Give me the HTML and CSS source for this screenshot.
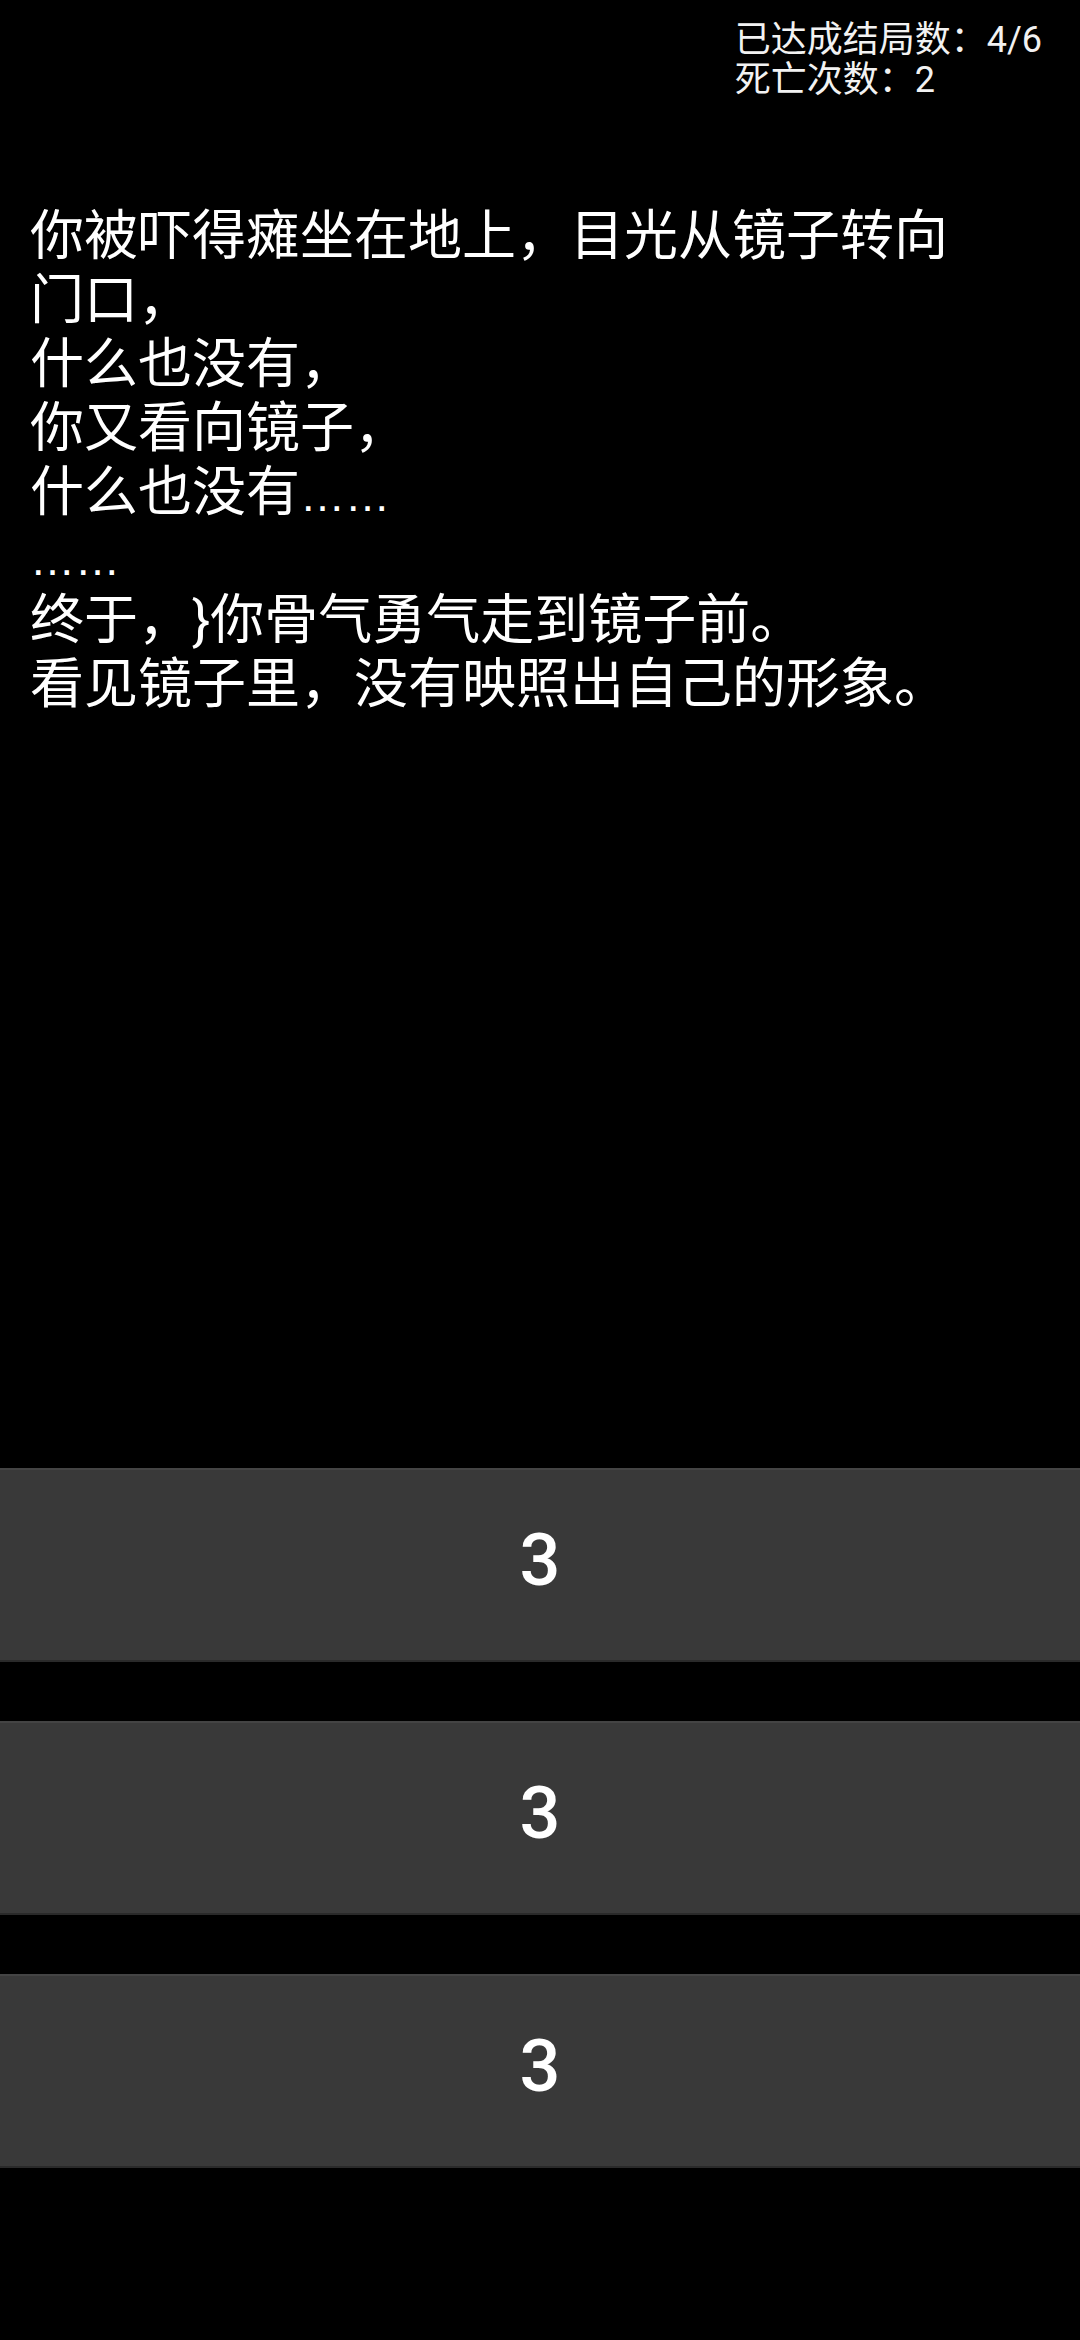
FILE: index.html
```
<!DOCTYPE html>
<html lang="zh-CN">
<head>
<meta charset="utf-8">
<meta name="viewport" content="width=1080">
<title>镜子</title>
<link rel="stylesheet" href="styles.css">
</head>
<body>
<div class="screen">
  <header class="stats">
    <div class="stats-box">
      <div class="stat">已达成结局数：4/6</div>
      <div class="stat">死亡次数：2</div>
    </div>
  </header>
  <main class="story">
    <p class="line">你被吓得瘫坐在地上，目光从镜子转向门口，</p>
    <p class="line">什么也没有，</p>
    <p class="line">你又看向镜子，</p>
    <p class="line">什么也没有<span class="ellipsis">……</span></p>
    <p class="line"><span class="ellipsis">……</span></p>
    <p class="line">终于，}你骨气勇气走到镜子前。</p>
    <p class="line">看见镜子里，没有映照出自己的形象。</p>
  </main>
  <nav class="choices">
    <button class="choice" type="button">3</button>
    <button class="choice" type="button">3</button>
    <button class="choice" type="button">3</button>
  </nav>
</div>
</body>
</html>
```
FILE: styles.css
```
html, body {
  margin: 0;
  padding: 0;
  background: #000;
}

.screen {
  width: 1080px;
  height: 2340px;
  display: flex;
  flex-direction: column;
  background: #000;
  color: #fff;
  font-family: Roboto, "Noto Sans CJK SC", sans-serif;
  text-spacing-trim: space-all;
  overflow: hidden;
}

.stats {
  display: flex;
  justify-content: flex-end;
  padding: 20px 38px 0 0;
}

.stats-box {
  font-size: 36px;
  line-height: 40px;
  color: #f2f2f2;
}

.stat {
  white-space: nowrap;
}

.story {
  margin-top: 105px;
  padding-left: 30px;
  width: 945px;
  font-size: 54px;
  line-height: 64px;
}

.line {
  margin: 0;
}

.ellipsis {
  font-family: "Liberation Sans", Arial, sans-serif;
  font-size: 45px;
  line-height: 58px;
}

.choices {
  margin-top: auto;
  padding-bottom: 172px;
  display: flex;
  flex-direction: column;
  gap: 59px;
}

.choice {
  display: flex;
  align-items: center;
  justify-content: center;
  box-sizing: border-box;
  height: 194px;
  width: 100%;
  margin: 0;
  padding: 0 0 10px 0;
  background: #393939;
  border: none;
  border-top: 2px solid #444444;
  border-bottom: 2px solid #2a2a2a;
  color: #fff;
  font-family: Roboto, "Noto Sans", sans-serif;
  font-weight: 500;
  font-size: 72px;
}
```
